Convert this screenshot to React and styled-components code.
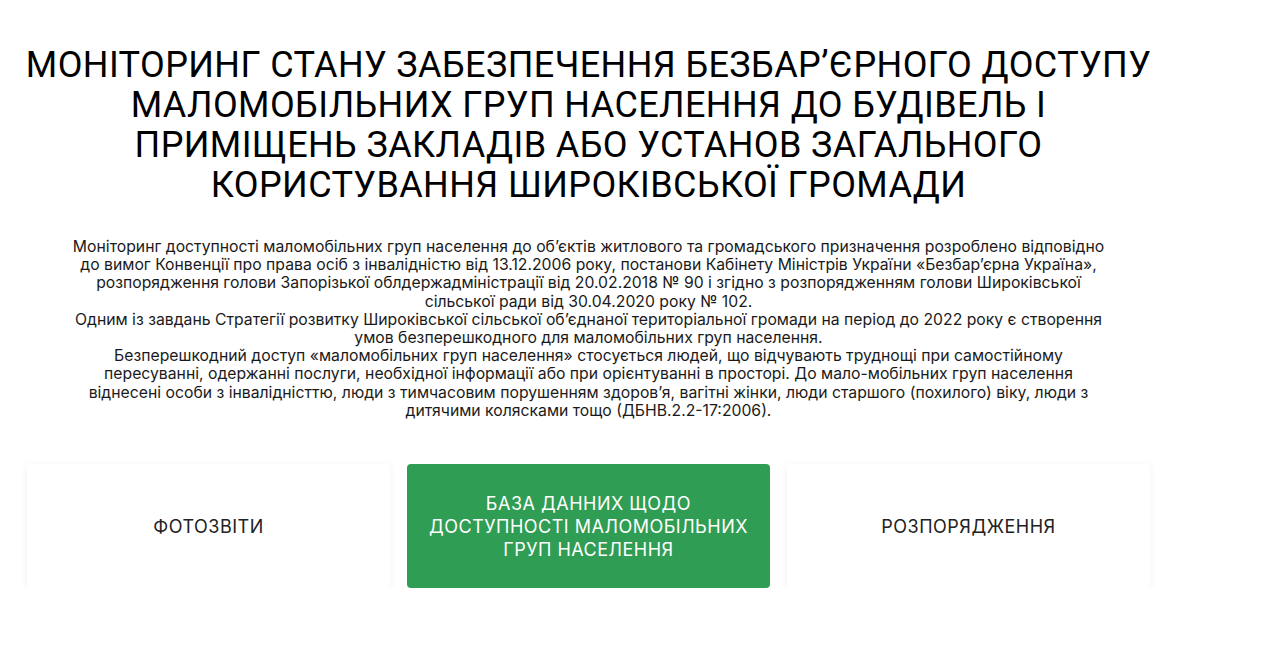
import React from 'react';
import styled, { createGlobalStyle } from 'styled-components';

const GlobalStyle = createGlobalStyle`
  body {
    margin: 0;
    background: #ffffff;
    font-family: Inter, "Noto Sans", sans-serif;
  }
`;

const Page = styled('main')`
  width: 1123px;
  margin-left: 27px;
  padding-top: 45px;
  display: flex;
  flex-direction: column;
  align-items: center;
`;

const Title = styled('h1')`
  margin: 0;
  font-family: Roboto, "Liberation Sans", sans-serif;
  font-weight: 400;
  font-size: 36px;
  line-height: 40px;
  letter-spacing: 0.4px;
  color: #000;
  text-align: center;
  text-transform: uppercase;
  white-space: nowrap;
`;

const Intro = styled('div')`
  margin-top: 33px;
  font-size: 15.75px;
  line-height: 18.2px;
  color: #1a1a1a;
  text-align: center;
  white-space: nowrap;
`;

const Cards = styled('div')`
  margin-top: 44px;
  width: 100%;
  display: grid;
  grid-template-columns: repeat(3, 1fr);
  gap: 17px;
`;

const Card = styled('a')`
  height: 124px;
  padding: 0 16px;
  display: flex;
  align-items: center;
  justify-content: center;
  text-align: center;
  border-radius: 4px;
  font-size: 18px;
  line-height: 23px;
  letter-spacing: 0.5px;
  text-transform: uppercase;
  text-decoration: none;
  background: ${(p) => (p.$active ? '#2f9d53' : '#fff')};
  color: ${(p) => (p.$active ? '#fff' : '#222')};
  box-shadow: ${(p) =>
    p.$active ? 'none' : '0 2px 8px rgba(0, 0, 0, 0.06)'};
`;

export default function App() {
  return (
    <>
      <GlobalStyle />
      <Page>
        <Title>
          Моніторинг стану забезпечення безбар’єрного доступу
          <br />
          маломобільних груп населення до будівель і
          <br />
          приміщень закладів або установ загального
          <br />
          користування Широківської громади
        </Title>
        <Intro>
          Моніторинг доступності маломобільних груп населення до об’єктів житлового та громадського призначення розроблено відповідно
          <br />
          до вимог Конвенції про права осіб з інвалідністю від 13.12.2006 року, постанови Кабінету Міністрів України «Безбар’єрна Україна»,
          <br />
          розпорядження голови Запорізької облдержадміністрації від 20.02.2018 № 90 і згідно з розпорядженням голови Широківської
          <br />
          сільської ради від 30.04.2020 року № 102.
          <br />
          Одним із завдань Стратегії розвитку Широківської сільської об’єднаної територіальної громади на період до 2022 року є створення
          <br />
          умов безперешкодного для маломобільних груп населення.
          <br />
          Безперешкодний доступ «маломобільних груп населення» стосується людей, що відчувають труднощі при самостійному
          <br />
          пересуванні, одержанні послуги, необхідної інформації або при орієнтуванні в просторі. До мало-мобільних груп населення
          <br />
          віднесені особи з інвалідністтю, люди з тимчасовим порушенням здоров’я, вагітні жінки, люди старшого (похилого) віку, люди з
          <br />
          дитячими колясками тощо (ДБНВ.2.2-17:2006).
        </Intro>
        <Cards>
          <Card href="#">Фотозвіти</Card>
          <Card href="#" $active>
            База данних щодо
            <br />
            доступності маломобільних
            <br />
            груп населення
          </Card>
          <Card href="#">Розпорядження</Card>
        </Cards>
      </Page>
    </>
  );
}
